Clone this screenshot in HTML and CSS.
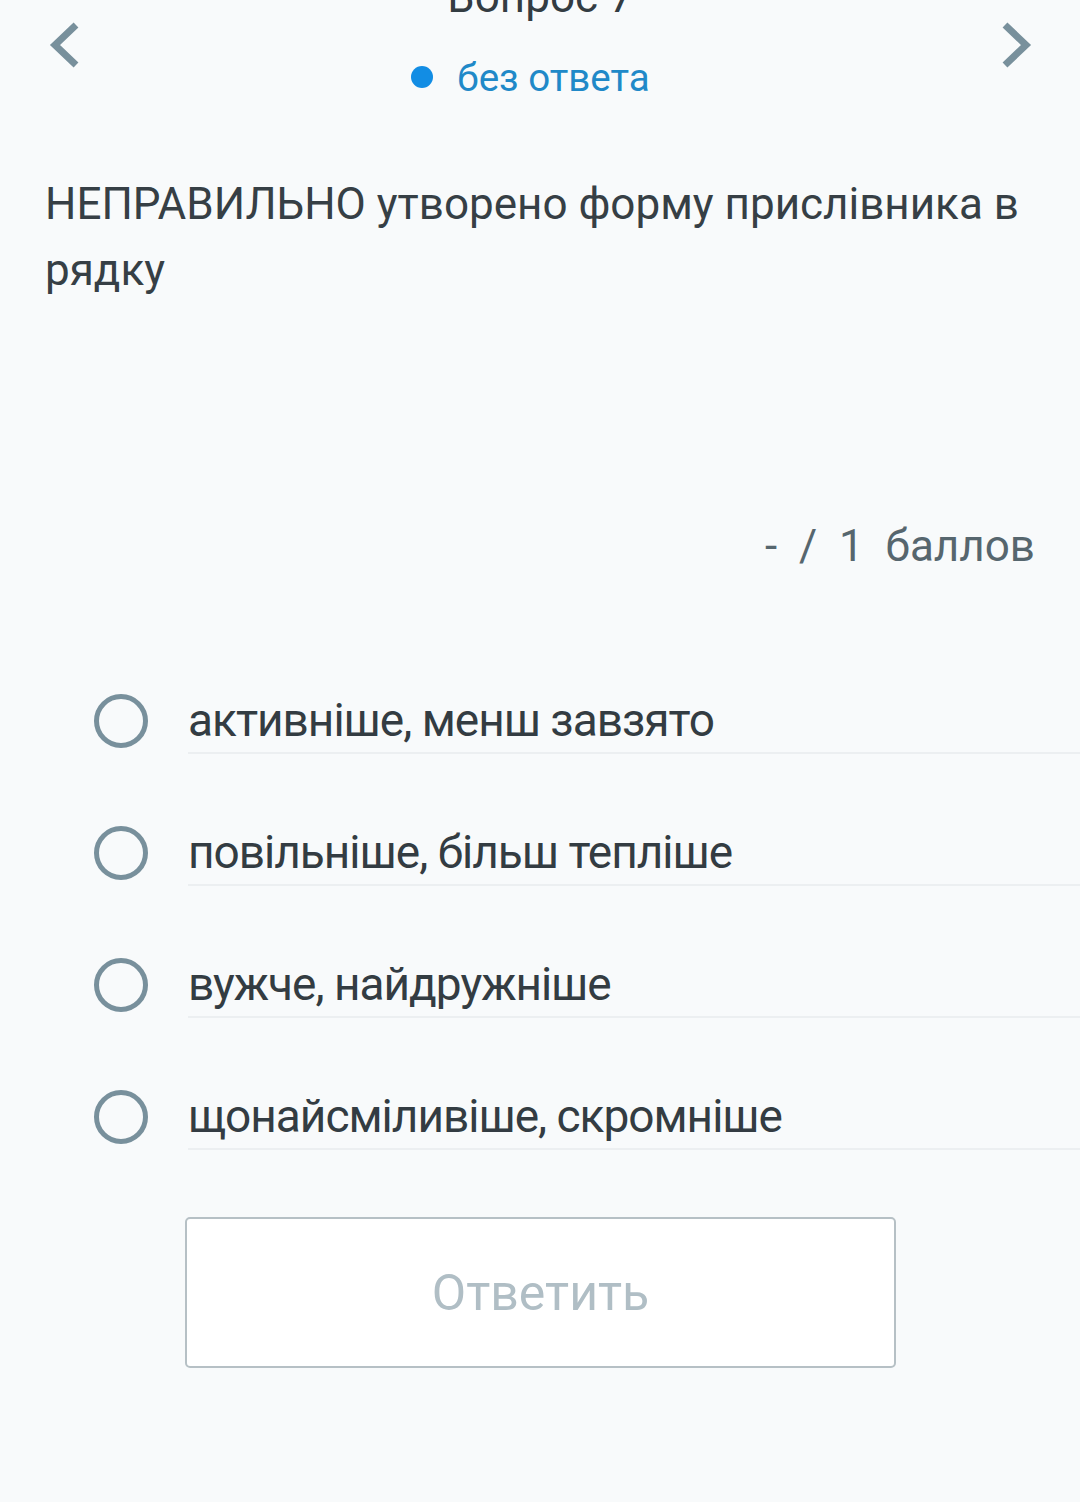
FILE: index.html
```html
<!DOCTYPE html>
<html lang="uk">
<head>
    <meta charset="utf-8">
    <meta name="viewport" content="width=device-width, initial-scale=1.0">
    <title>Вопрос 7</title>
    <link rel="stylesheet" href="styles.css">
</head>
<body>
    <div class="page">
        <div class="nav">
            <div class="arrow">
                <svg width="34" height="48" viewBox="0 0 34 48"><path d="M28 4 L7 24 L28 44" fill="none" stroke="#78909c" stroke-width="7"/></svg>
            </div>
            <div class="heading">
                <div class="title">Вопрос 7</div>
                <div class="status"><span class="dot"></span><span>без ответа</span></div>
            </div>
            <div class="arrow">
                <svg width="34" height="48" viewBox="0 0 34 48"><path d="M6 4 L27 24 L6 44" fill="none" stroke="#78909c" stroke-width="7"/></svg>
            </div>
        </div>

        <p class="question">НЕПРАВИЛЬНО утворено форму прислівника в рядку</p>

        <div class="points">-&nbsp; /&nbsp; 1&nbsp; баллов</div>

        <ul class="options">
            <li class="option"><span class="radio"></span><span class="label">активніше, менш завзято</span></li>
            <li class="option"><span class="radio"></span><span class="label">повільніше, більш тепліше</span></li>
            <li class="option"><span class="radio"></span><span class="label">вужче, найдружніше</span></li>
            <li class="option"><span class="radio"></span><span class="label">щонайсміливіше, скромніше</span></li>
        </ul>

        <button class="submit" type="button" disabled>Ответить</button>
    </div>
</body>
</html>
```

FILE: styles.css
```css
body {
    margin: 0;
    padding: 0;
    font-family: Roboto, "Noto Sans", sans-serif;
    background-color: #f8fafb;
    color: #37434a;
}

.page {
    margin-top: -29px;
    padding-bottom: 130px;
}

.nav {
    display: flex;
    justify-content: space-between;
    align-items: flex-start;
    padding: 0 47px 0 48px;
}

.arrow {
    margin-top: 50px;
}

.arrow svg {
    display: block;
}

.heading {
    display: flex;
    flex-direction: column;
    align-items: center;
}

.title {
    font-size: 44px;
    line-height: 52px;
    color: #333c42;
}

.status {
    display: flex;
    align-items: center;
    gap: 24px;
    margin-top: 31px;
    padding-right: 20px;
    font-size: 38.5px;
    line-height: 48px;
    color: #2089c8;
}

.dot {
    width: 22px;
    height: 22px;
    border-radius: 50%;
    background-color: #128de4;
    margin-top: -2px;
}

.question {
    margin: 69px 0 0 0;
    padding: 0 45px;
    font-size: 44px;
    line-height: 66px;
    color: #363f45;
}

.points {
    margin-top: 217px;
    padding-right: 45px;
    text-align: right;
    font-size: 44px;
    line-height: 52px;
    color: #56666e;
}

.options {
    list-style: none;
    margin: 50px 0 0 0;
    padding: 0;
}

.option {
    display: flex;
    align-items: flex-start;
    padding-left: 94px;
}

.radio {
    flex: none;
    width: 44px;
    height: 44px;
    border: 5px solid #78909c;
    border-radius: 50%;
    margin-top: 72px;
}

.label {
    flex: 1;
    margin-left: 40px;
    padding-top: 71px;
    padding-bottom: 5px;
    font-size: 46px;
    line-height: 54px;
    letter-spacing: -1px;
    color: #333c42;
    border-bottom: 2px solid #eceff1;
}

.submit {
    display: block;
    margin: 67px 0 0 185px;
    width: 711px;
    height: 151px;
    background-color: #ffffff;
    border: 2px solid #b6c0c5;
    border-radius: 5px;
    font-family: Roboto, "Noto Sans", sans-serif;
    font-size: 50px;
    color: #b0bec5;
}
```
